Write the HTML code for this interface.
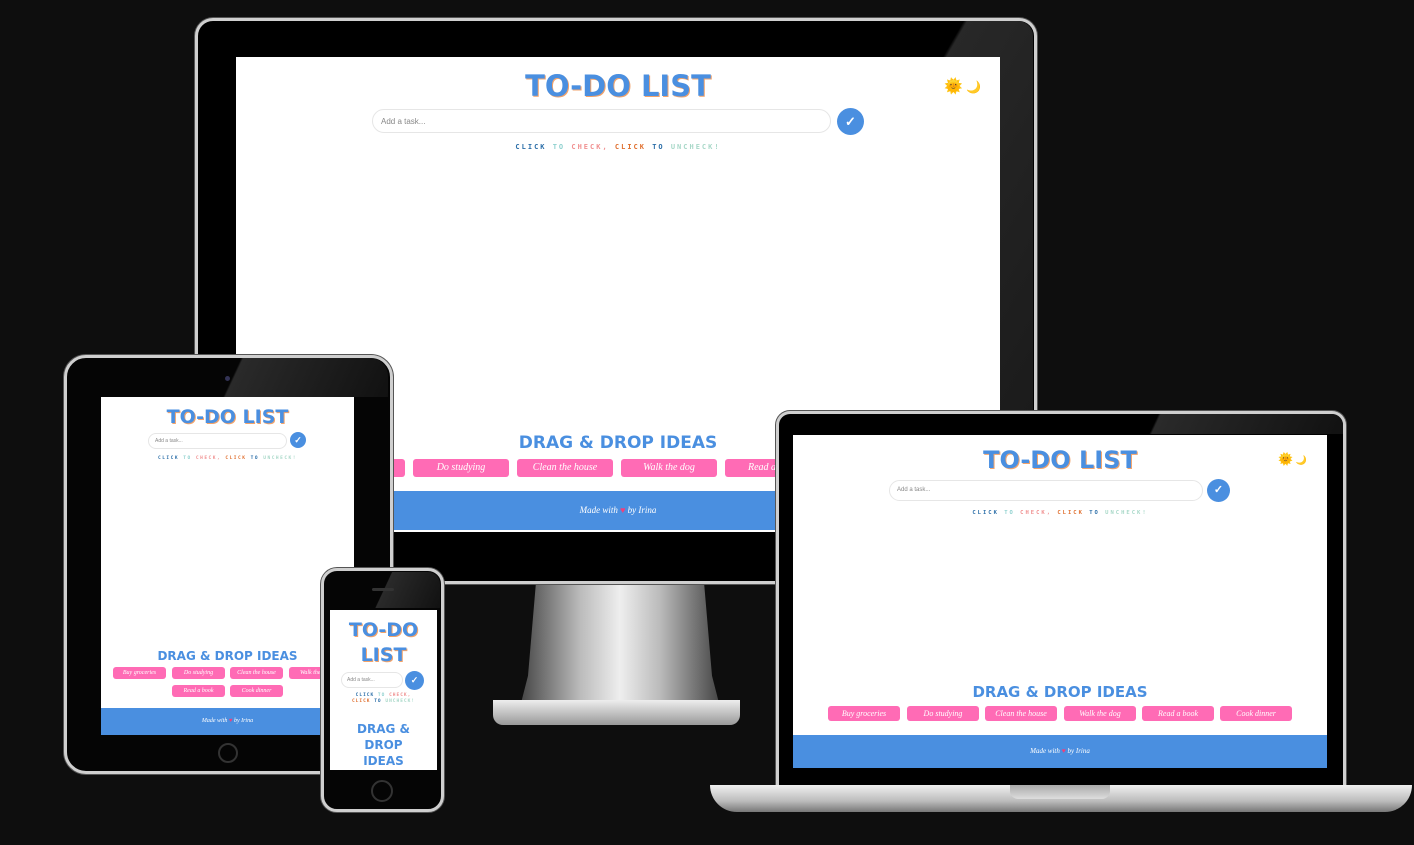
<!DOCTYPE html>
<html><head><meta charset="utf-8"><style>
*{margin:0;padding:0;box-sizing:border-box}
body{width:1414px;height:845px;background:#0e0e0e;position:relative;overflow:hidden;font-family:"Liberation Sans",sans-serif}
.a{position:absolute}
.frame{position:absolute;background:#000;border:3px solid #cfcfcf;box-shadow:0 0 0 1px #555}
.scr{position:absolute;background:#fff;overflow:hidden}
.t{position:absolute;left:0;right:0;text-align:center;font-weight:900;color:#4a8fe0;text-shadow:1px 1px 0 #f2a36b;letter-spacing:0;font-family:"DejaVu Sans","Liberation Sans",sans-serif}
.inp{position:absolute;border:1px solid #e6e6e6;border-radius:20px;color:#888;background:#fff}
.btn{position:absolute;border-radius:50%;background:#4a8fe0;color:#fff;text-align:center;font-weight:bold}
.hint{position:absolute;left:0;right:0;text-align:center;font-weight:bold;letter-spacing:2px;font-family:"DejaVu Sans Mono",monospace}
.pill{position:absolute;background:#ff6bb5;color:#fff;border-radius:3px;text-align:center;font-style:italic;font-family:"Liberation Serif",serif}
.foot{position:absolute;left:0;right:0;bottom:0;background:#4a8fe0;color:#fff;text-align:center;font-style:italic;font-family:"Liberation Serif",serif}
.c1{color:#2b6ea8}.c2{color:#8fd1cf}.c3{color:#f09090}.c4{color:#e07030}.c5{color:#a8d8c8}
</style></head><body>

<!-- desktop stand -->
<div class="a" style="left:520px;top:582px;width:200px;height:125px;background:linear-gradient(90deg,#444,#bbb 30%,#eee 50%,#bbb 70%,#444);clip-path:polygon(8% 0,92% 0,96% 75%,100% 100%,0 100%,4% 75%)"></div>
<div class="a" style="left:493px;top:700px;width:247px;height:25px;background:linear-gradient(#eee,#999);border-radius:0 0 10px 10px"></div>

<!-- desktop -->
<div class="frame" style="left:195px;top:18px;width:842px;height:566px;border-radius:18px"></div>
<div class="a" style="left:890px;top:21px;width:143px;height:390px;background:linear-gradient(120deg,transparent 20%,#2c2c2c 21%,#1e1e1e);opacity:.9;border-radius:0 15px 0 0"></div>
<div class="scr" style="left:236px;top:57px;width:764px;height:475px">
  <div class="t" style="top:12px;font-size:29px">TO-DO LIST</div>
  <div class="a" style="left:708px;top:20px;font-size:15px">🌞<span style="font-size:12px"> 🌙</span></div>
  <div class="inp" style="left:136px;top:52px;width:459px;height:24px;font-size:8px;padding:7px 8px">Add a task...</div>
  <div class="btn" style="left:601px;top:51px;width:27px;height:27px;font-size:13px;line-height:27px">✓</div>
  <div class="hint" style="top:86px;font-size:7px"><span class="c1">CLICK</span> <span class="c2">TO</span> <span class="c3">CHECK,</span> <span class="c4">CLICK</span> <span class="c1">TO</span> <span class="c5">UNCHECK!</span></div>
  <div class="t" style="top:376px;font-size:17px;text-shadow:none">DRAG &amp; DROP IDEAS</div>
  <div class="pill" style="left:102px;top:402px;width:67px;height:18px"></div>
  <div class="pill" style="left:177px;top:402px;width:96px;height:18px;font-size:10px;line-height:18px">Do studying</div>
  <div class="pill" style="left:281px;top:402px;width:96px;height:18px;font-size:10px;line-height:18px">Clean the house</div>
  <div class="pill" style="left:385px;top:402px;width:96px;height:18px;font-size:10px;line-height:18px">Walk the dog</div>
  <div class="pill" style="left:489px;top:402px;width:96px;height:18px;font-size:10px;line-height:18px">Read a book</div>
  <div class="foot" style="height:39px;bottom:2px;font-size:9px;line-height:39px">Made with <span style="color:#f0407a;font-style:normal">♥</span> by Irina</div>
</div>

<!-- tablet -->
<div class="frame" style="left:64px;top:355px;width:329px;height:419px;border-radius:22px;background:#050505"></div>
<div class="a" style="left:200px;top:358px;width:188px;height:39px;background:linear-gradient(115deg,transparent 20%,#2a2a2a 21%,#111);border-radius:0 18px 0 0"></div>
<div class="a" style="left:225px;top:376px;width:5px;height:5px;border-radius:50%;background:#335"></div>
<div class="a" style="left:218px;top:743px;width:20px;height:20px;border-radius:50%;border:2px solid #333"></div>
<div class="scr" style="left:101px;top:397px;width:253px;height:338px">
  <div class="t" style="top:9px;font-size:19px">TO-DO LIST</div>
  <div class="inp" style="left:47px;top:36px;width:139px;height:16px;font-size:5px;padding:4px 6px">Add a task...</div>
  <div class="btn" style="left:189px;top:35px;width:16px;height:16px;font-size:9px;line-height:16px">✓</div>
  <div class="hint" style="top:59px;font-size:4.5px;letter-spacing:1.5px"><span class="c1">CLICK</span> <span class="c2">TO</span> <span class="c3">CHECK,</span> <span class="c4">CLICK</span> <span class="c1">TO</span> <span class="c5">UNCHECK!</span></div>
  <div class="t" style="top:252px;font-size:12px;text-shadow:none">DRAG &amp; DROP IDEAS</div>
  <div class="pill" style="left:12px;top:270px;width:53px;height:12px;font-size:6px;line-height:12px">Buy groceries</div>
  <div class="pill" style="left:71px;top:270px;width:53px;height:12px;font-size:6px;line-height:12px">Do studying</div>
  <div class="pill" style="left:129px;top:270px;width:53px;height:12px;font-size:6px;line-height:12px">Clean the house</div>
  <div class="pill" style="left:188px;top:270px;width:53px;height:12px;font-size:6px;line-height:12px">Walk the dog</div>
  <div class="pill" style="left:71px;top:288px;width:53px;height:12px;font-size:6px;line-height:12px">Read a book</div>
  <div class="pill" style="left:129px;top:288px;width:53px;height:12px;font-size:6px;line-height:12px">Cook dinner</div>
  <div class="foot" style="height:27px;font-size:6px;line-height:27px">Made with <span style="color:#f0407a;font-style:normal">♥</span> by Irina</div>
</div>

<!-- phone -->
<div class="frame" style="left:321px;top:568px;width:123px;height:244px;border-radius:16px;background:#050505"></div>
<div class="a" style="left:370px;top:572px;width:70px;height:36px;background:linear-gradient(115deg,transparent 25%,#2a2a2a 26%,#111);border-radius:0 12px 0 0"></div>
<div class="a" style="left:372px;top:588px;width:22px;height:3px;border-radius:2px;background:#333"></div>
<div class="a" style="left:371px;top:780px;width:22px;height:22px;border-radius:50%;border:2px solid #333"></div>
<div class="scr" style="left:330px;top:610px;width:107px;height:160px">
  <div class="t" style="top:8px;font-size:19px;line-height:25px">TO-DO<br>LIST</div>
  <div class="inp" style="left:11px;top:62px;width:62px;height:16px;font-size:5px;padding:4px 5px">Add a task...</div>
  <div class="btn" style="left:75px;top:61px;width:19px;height:19px;font-size:9px;line-height:19px">✓</div>
  <div class="hint" style="top:83px;font-size:4.5px;letter-spacing:1px;line-height:6px"><span class="c1">CLICK</span> <span class="c2">TO</span> <span class="c3">CHECK,</span><br><span class="c4">CLICK</span> <span class="c1">TO</span> <span class="c5">UNCHECK!</span></div>
  <div class="t" style="top:111px;font-size:12px;line-height:16px;text-shadow:none">DRAG &amp;<br>DROP<br>IDEAS</div>
</div>

<!-- laptop -->
<div class="frame" style="left:776px;top:411px;width:570px;height:376px;border-radius:14px 14px 0 0;border-bottom:none"></div>
<div class="a" style="left:1110px;top:414px;width:233px;height:20px;background:linear-gradient(115deg,transparent 20%,#2a2a2a 21%,#111);border-radius:0 11px 0 0"></div>
<div class="a" style="left:710px;top:785px;width:702px;height:27px;background:linear-gradient(#f0f0f0,#bbb 60%,#777);border-radius:0 0 30px 30px"></div>
<div class="a" style="left:1010px;top:785px;width:100px;height:14px;background:linear-gradient(#aaa,#ddd);border-radius:0 0 8px 8px"></div>
<div class="scr" style="left:793px;top:435px;width:534px;height:333px">
  <div class="t" style="top:11px;font-size:24px">TO-DO LIST</div>
  <div class="a" style="left:485px;top:17px;font-size:12px">🌞<span style="font-size:9px"> 🌙</span></div>
  <div class="inp" style="left:96px;top:45px;width:314px;height:21px;font-size:6px;padding:6px 7px">Add a task...</div>
  <div class="btn" style="left:414px;top:44px;width:23px;height:23px;font-size:11px;line-height:23px">✓</div>
  <div class="hint" style="top:75px;font-size:5.5px"><span class="c1">CLICK</span> <span class="c2">TO</span> <span class="c3">CHECK,</span> <span class="c4">CLICK</span> <span class="c1">TO</span> <span class="c5">UNCHECK!</span></div>
  <div class="t" style="top:248px;font-size:15px;text-shadow:none">DRAG &amp; DROP IDEAS</div>
  <div class="pill" style="left:35px;top:271px;width:72px;height:15px;font-size:8px;line-height:15px">Buy groceries</div>
  <div class="pill" style="left:114px;top:271px;width:72px;height:15px;font-size:8px;line-height:15px">Do studying</div>
  <div class="pill" style="left:192px;top:271px;width:72px;height:15px;font-size:8px;line-height:15px">Clean the house</div>
  <div class="pill" style="left:271px;top:271px;width:72px;height:15px;font-size:8px;line-height:15px">Walk the dog</div>
  <div class="pill" style="left:349px;top:271px;width:72px;height:15px;font-size:8px;line-height:15px">Read a book</div>
  <div class="pill" style="left:427px;top:271px;width:72px;height:15px;font-size:8px;line-height:15px">Cook dinner</div>
  <div class="foot" style="height:33px;font-size:7px;line-height:33px">Made with <span style="color:#f0407a;font-style:normal">♥</span> by Irina</div>
</div>
</body></html>
